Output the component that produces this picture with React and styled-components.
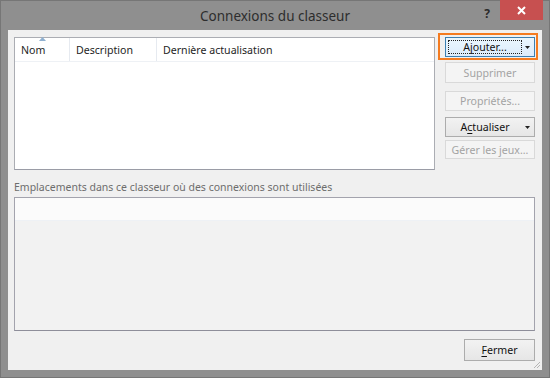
import React from "react";
import styled, { createGlobalStyle } from "styled-components";

const Global = createGlobalStyle`
  html, body { margin: 0; padding: 0; background: #8e8e8e; }
  * { box-sizing: border-box; }
`;

const FONT = `"Noto Sans", "Open Sans", "DejaVu Sans", sans-serif`;

const Window = styled.div`
  width: 550px;
  height: 378px;
  background: #8f8f8f;
  border: 1px solid #767676;
  display: flex;
  flex-direction: column;
  font-family: ${FONT};
`;

const TitleBar = styled.div`
  height: 29px;
  display: grid;
  grid-template-columns: 1fr auto 1fr;
  align-items: center;
`;

const Title = styled.div`
  grid-column: 2;
  font-size: 13.5px;
  color: #2d2d2d;
  padding-top: 1px;
`;

const Controls = styled.div`
  grid-column: 3;
  justify-self: end;
  align-self: start;
  display: flex;
  align-items: flex-start;
`;

const Help = styled.div`
  width: 20px;
  height: 20px;
  font-size: 12px;
  font-weight: bold;
  color: #2a2a2a;
  display: flex;
  align-items: center;
  justify-content: center;
  margin-right: 3px;
  margin-top: 2px;
`;

const Close = styled.div`
  width: 43px;
  height: 20px;
  margin-top: -1px;
  margin-right: 6px;
  background: #c75050;
  display: flex;
  align-items: center;
  justify-content: center;
`;

const Client = styled.div`
  flex: 1;
  margin: 0 7px 7px 7px;
  background: #f0f0f0;
  display: flex;
  flex-direction: column;
  padding: 7px 7px 6px 6px;
`;

const TopRow = styled.div`
  display: flex;
  align-items: flex-start;
`;

const ListBox = styled.div`
  width: 421px;
  height: 133px;
  background: #ffffff;
  border: 1px solid #abadb3;
  border-bottom-color: #9a9ca6;
`;

const Header = styled.div`
  height: 24px;
  display: flex;
  border-bottom: 1px solid #eef1f5;
`;

const HeadCell = styled.div`
  position: relative;
  width: ${(p) => p.$w}px;
  flex: ${(p) => (p.$grow ? 1 : "none")};
  border-right: ${(p) => (p.$grow ? "none" : "1px solid #e6eaf0")};
  font-size: 10.6px;
  color: #1e1e1e;
  padding: 4px 0 0 6px;
  line-height: 16px;
`;

const SortArrow = styled.svg`
  position: absolute;
  left: 24px;
  top: -1px;
`;

const ButtonCol = styled.div`
  margin-left: 10px;
  width: 90px;
  display: flex;
  flex-direction: column;
`;

const Btn = styled.div`
  position: relative;
  height: ${(p) => p.$h || 20}px;
  margin-top: ${(p) => p.$mt || 0}px;
  border: 1px solid ${(p) => (p.$disabled ? "#d9d9d9" : "#acacac")};
  background: ${(p) =>
    p.$disabled ? "#f4f4f4" : "linear-gradient(#f2f2f2, #e6e6e6)"};
  color: ${(p) => (p.$disabled ? "#a3a3a3" : "#111")};
  font-size: 10.6px;
  display: flex;
  align-items: center;
  justify-content: center;
  padding-right: ${(p) => (p.$split ? 10 : 0)}px;
`;

const PrimaryBtn = styled(Btn)`
  border-color: #3c7fb1;
  background: linear-gradient(#eaf6fd, #dcecfc);
`;

const Focus = styled.div`
  position: absolute;
  left: 2px;
  top: 2px;
  bottom: 2px;
  right: 12px;
  border: 1px dotted #222;
`;

const Arrow = styled.svg`
  position: absolute;
  right: 4px;
  top: 8px;
`;

const Highlight = styled.div`
  position: absolute;
  left: -8px;
  top: -5px;
  right: -4px;
  bottom: -4px;
  border: 2px solid #f47b20;
  pointer-events: none;
`;

const U = styled.span`
  text-decoration: underline;
  text-underline-offset: 2px;
`;

const Label = styled.div`
  margin-top: 10px;
  font-size: 10.5px;
  line-height: 15px;
  color: #6d6d6d;
`;

const Box2 = styled.div`
  margin-top: 2px;
  width: 521px;
  height: 134px;
  border: 1px solid #a3a3ad;
  border-bottom-color: #8e8e9a;
  background: #f2f2f2;
  display: flex;
  flex-direction: column;
`;

const WhiteRow = styled.div`
  height: 23px;
  background: #fbfbfb;
  border-bottom: 1px solid #eef1f5;
`;

const Footer = styled.div`
  margin-top: 8px;
  display: flex;
  justify-content: flex-end;
  position: relative;
  flex: 1;
`;

const FooterBtn = styled(Btn)`
  width: 71px;
  height: 22px;
`;

const Grip = styled.svg`
  position: absolute;
  right: -6px;
  bottom: -5px;
`;

const DownArrow = () => (
  <Arrow width="5" height="3" viewBox="0 0 5 3">
    <path d="M0 0h5L2.5 3z" fill="#222" />
  </Arrow>
);

export default function App() {
  return (
    <>
      <Global />
      <Window>
        <TitleBar>
          <Title>Connexions du classeur</Title>
          <Controls>
            <Help>?</Help>
            <Close>
              <svg width="9" height="9" viewBox="0 0 9 9">
                <path d="M1 1L8 8M8 1L1 8" stroke="#fff" strokeWidth="2" />
              </svg>
            </Close>
          </Controls>
        </TitleBar>
        <Client>
          <TopRow>
            <ListBox>
              <Header>
                <HeadCell $w={55}>
                  Nom
                  <SortArrow width="7" height="4" viewBox="0 0 7 4">
                    <path d="M0 4L3.5 0L7 4z" fill="#8fb0d0" />
                  </SortArrow>
                </HeadCell>
                <HeadCell $w={87}>Description</HeadCell>
                <HeadCell $grow>Dernière actualisation</HeadCell>
              </Header>
            </ListBox>
            <ButtonCol>
              <PrimaryBtn $split>
                <Focus />
                <span>
                  A<U>j</U>outer...
                </span>
                <DownArrow />
                <Highlight />
              </PrimaryBtn>
              <Btn $disabled $mt={5} $h={21}>Supprimer</Btn>
              <Btn $disabled $mt={8}>Propriétés...</Btn>
              <Btn $mt={6} $split>
                <span>
                  A<U>c</U>tualiser
                </span>
                <DownArrow />
              </Btn>
              <Btn $disabled $mt={3} $h={19}>Gérer les jeux...</Btn>
            </ButtonCol>
          </TopRow>
          <Label>Emplacements dans ce classeur où des connexions sont utilisées</Label>
          <Box2>
            <WhiteRow />
          </Box2>
          <Footer>
            <FooterBtn>
              <span>
                <U>F</U>ermer
              </span>
            </FooterBtn>
            <Grip width="8" height="8" viewBox="0 0 8 8">
              <path d="M7 1L1 7M7 4L4 7" stroke="#b5b5b5" strokeWidth="1" />
            </Grip>
          </Footer>
        </Client>
      </Window>
    </>
  );
}
